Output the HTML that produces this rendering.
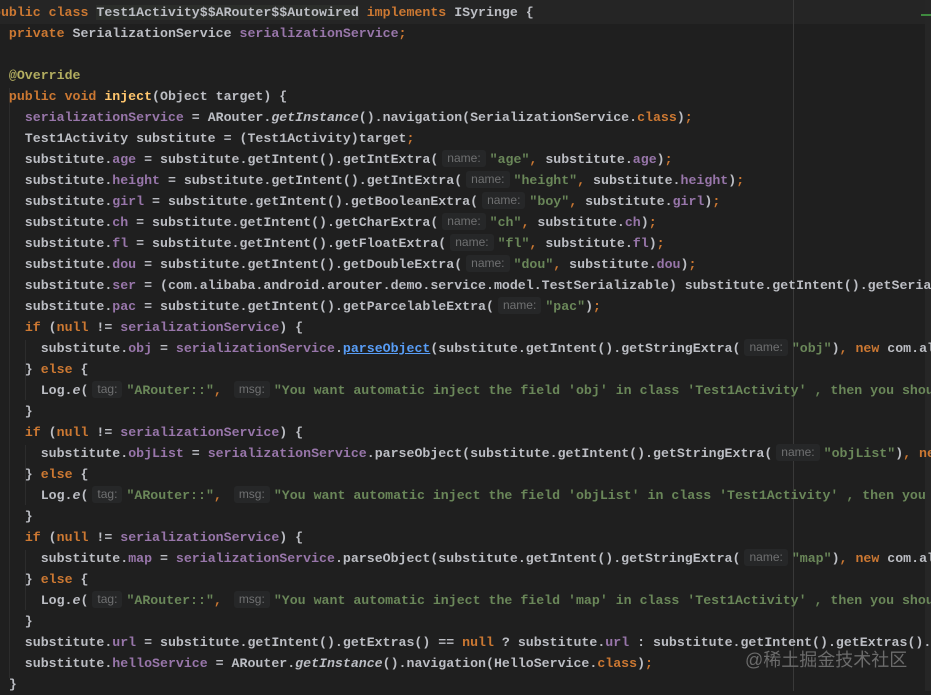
<!DOCTYPE html>
<html><head><meta charset="utf-8"><style>
html,body{margin:0;padding:0;background:#1f1f1f;width:931px;height:691px;overflow:hidden}
#c{position:absolute;left:-7px;top:2px;width:938px;font-family:"Liberation Mono",monospace;font-size:13.25px;line-height:21px;color:#bcbec4;font-weight:bold;letter-spacing:0}
.l{height:21px;white-space:pre;overflow:hidden}
.k{color:#cc7832}.f{color:#9876aa}.s{color:#6a8759}.a{color:#b3ae60}.m{color:#ffc66d}.i{font-style:italic}
.u{color:#589df6;text-decoration:underline}
.h{font-family:"Liberation Sans",sans-serif;font-weight:normal;font-size:12px;color:#6f7071;background:#262728;border-radius:3px;padding:1px 5px;margin:0 4px 0 4px;display:inline-block;line-height:15px;vertical-align:1px}
.hl{background:#2b2d2a}
#top{position:absolute;left:0;top:0;width:931px;height:24px;background:#252525}
#vl{position:absolute;left:793px;top:0;width:1px;height:691px;background:#393939}
#sb{position:absolute;left:925px;top:0;width:6px;height:691px;background:#262626}
.g{position:absolute;width:1px;background:#2c2c2c}
#wm{position:absolute;left:745px;top:646px;font-family:"Liberation Sans","Noto Sans CJK SC",sans-serif;font-size:18px;color:#6b6b6b;white-space:nowrap}
</style></head><body>
<div id="top"></div>
<div id="vl"></div>
<div id="sb"></div>
<div style="position:absolute;left:921px;top:14px;width:10px;height:2px;background:#3f8a3f"></div>
<div class="g" style="left:9px;top:88px;height:590px"></div>
<div class="g" style="left:25px;top:340px;height:60px"></div>
<div class="g" style="left:25px;top:445px;height:60px"></div>
<div class="g" style="left:25px;top:550px;height:60px"></div>
<div id="c">
<div class="l"><span class="k">public class </span><span class="hl">Test1Activity$$ARouter$$Autowired</span><span class="k"> implements </span>ISyringe {</div>
<div class="l">  <span class="k">private </span>SerializationService <span class="f">serializationService</span><span class="k">;</span></div>
<div class="l"> </div>
<div class="l">  <span class="a">@Override</span></div>
<div class="l">  <span class="k">public void </span><span class="m">inject</span>(Object target) {</div>
<div class="l">    <span class="f">serializationService</span> = ARouter.<span class="i">getInstance</span>().navigation(SerializationService.<span class="k">class</span>)<span class="k">;</span></div>
<div class="l">    Test1Activity substitute = (Test1Activity)target<span class="k">;</span></div>
<div class="l">    substitute.<span class="f">age</span> = substitute.getIntent().getIntExtra(<span class="h">name:</span><span class="s">"age"</span><span class="k">,</span> substitute.<span class="f">age</span>)<span class="k">;</span></div>
<div class="l">    substitute.<span class="f">height</span> = substitute.getIntent().getIntExtra(<span class="h">name:</span><span class="s">"height"</span><span class="k">,</span> substitute.<span class="f">height</span>)<span class="k">;</span></div>
<div class="l">    substitute.<span class="f">girl</span> = substitute.getIntent().getBooleanExtra(<span class="h">name:</span><span class="s">"boy"</span><span class="k">,</span> substitute.<span class="f">girl</span>)<span class="k">;</span></div>
<div class="l">    substitute.<span class="f">ch</span> = substitute.getIntent().getCharExtra(<span class="h">name:</span><span class="s">"ch"</span><span class="k">,</span> substitute.<span class="f">ch</span>)<span class="k">;</span></div>
<div class="l">    substitute.<span class="f">fl</span> = substitute.getIntent().getFloatExtra(<span class="h">name:</span><span class="s">"fl"</span><span class="k">,</span> substitute.<span class="f">fl</span>)<span class="k">;</span></div>
<div class="l">    substitute.<span class="f">dou</span> = substitute.getIntent().getDoubleExtra(<span class="h">name:</span><span class="s">"dou"</span><span class="k">,</span> substitute.<span class="f">dou</span>)<span class="k">;</span></div>
<div class="l">    substitute.<span class="f">ser</span> = (com.alibaba.android.arouter.demo.service.model.TestSerializable) substitute.getIntent().getSerializableExtra(</div>
<div class="l">    substitute.<span class="f">pac</span> = substitute.getIntent().getParcelableExtra(<span class="h">name:</span><span class="s">"pac"</span>)<span class="k">;</span></div>
<div class="l">    <span class="k">if </span>(<span class="k">null </span>!= <span class="f">serializationService</span>) {</div>
<div class="l">      substitute.<span class="f">obj</span> = <span class="f">serializationService</span>.<span class="u">parseObject</span>(substitute.getIntent().getStringExtra(<span class="h">name:</span><span class="s">"obj"</span>)<span class="k">, new </span>com.alibaba</div>
<div class="l">    } <span class="k">else </span>{</div>
<div class="l">      Log.<span class="i">e</span>(<span class="h">tag:</span><span class="s">"ARouter::"</span><span class="k">,</span> <span class="h">msg:</span><span class="s">"You want automatic inject the field 'obj' in class 'Test1Activity' , then you should</span></div>
<div class="l">    }</div>
<div class="l">    <span class="k">if </span>(<span class="k">null </span>!= <span class="f">serializationService</span>) {</div>
<div class="l">      substitute.<span class="f">objList</span> = <span class="f">serializationService</span>.parseObject(substitute.getIntent().getStringExtra(<span class="h">name:</span><span class="s">"objList"</span>)<span class="k">, new</span></div>
<div class="l">    } <span class="k">else </span>{</div>
<div class="l">      Log.<span class="i">e</span>(<span class="h">tag:</span><span class="s">"ARouter::"</span><span class="k">,</span> <span class="h">msg:</span><span class="s">"You want automatic inject the field 'objList' in class 'Test1Activity' , then you should</span></div>
<div class="l">    }</div>
<div class="l">    <span class="k">if </span>(<span class="k">null </span>!= <span class="f">serializationService</span>) {</div>
<div class="l">      substitute.<span class="f">map</span> = <span class="f">serializationService</span>.parseObject(substitute.getIntent().getStringExtra(<span class="h">name:</span><span class="s">"map"</span>)<span class="k">, new </span>com.alibaba</div>
<div class="l">    } <span class="k">else </span>{</div>
<div class="l">      Log.<span class="i">e</span>(<span class="h">tag:</span><span class="s">"ARouter::"</span><span class="k">,</span> <span class="h">msg:</span><span class="s">"You want automatic inject the field 'map' in class 'Test1Activity' , then you should</span></div>
<div class="l">    }</div>
<div class="l">    substitute.<span class="f">url</span> = substitute.getIntent().getExtras() == <span class="k">null </span>? substitute.<span class="f">url</span> : substitute.getIntent().getExtras().get</div>
<div class="l">    substitute.<span class="f">helloService</span> = ARouter.<span class="i">getInstance</span>().navigation(HelloService.<span class="k">class</span>)<span class="k">;</span></div>
<div class="l">  }</div>
</div>
<div id="wm">@稀土掘金技术社区</div>
</body></html>
